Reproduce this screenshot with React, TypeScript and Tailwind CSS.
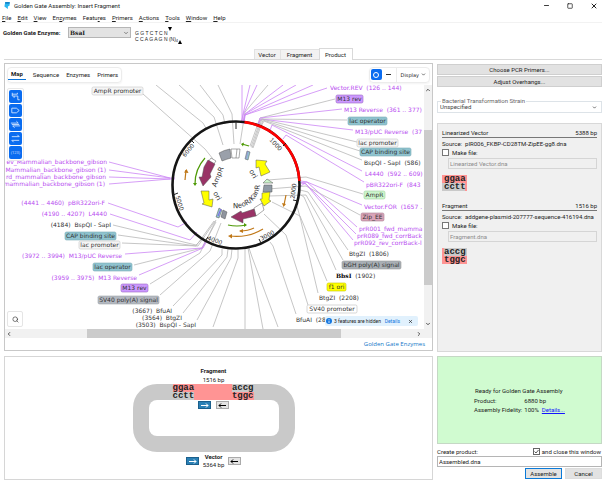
import { ChevronDown, ChevronLeft, ChevronRight, ChevronUp, Minus, Search, Square, X } from "lucide-react";
import type { ReactNode } from "react";

const GRAY = "#b8b8b8";
const PURPLE = "#cb85f5";
const INK = "#333333";
const VIOLET = "#b84df0";

type Line = { p: string; c?: string };

const lines: Line[] = [
  { p: "143,94 205,149 213,159" },
  { p: "156,85 203,123 207,130" },
  { p: "179,85 214,117 223,145" },
  { p: "200,85 223,115 225,124" },
  { p: "218,85 232,114 234,144" },
  { p: "268,85 245,112 240,144" },
  { p: "242,85 242,124", c: PURPLE },
  { p: "250,85 243,114 243,123", c: PURPLE },
  { p: "257,85 243,115 241,123", c: PURPLE },
  { p: "283,85 245,114 243,123", c: PURPLE },
  { p: "296,85 245,114 244,124", c: PURPLE },
  { p: "313,85 245,115", c: PURPLE },
  { p: "327,88 245,115 244,123", c: PURPLE },
  { p: "335,99 260,118 250,146" },
  { p: "342,109 260,118 258,125", c: PURPLE },
  { p: "347,120 261,119 251,147" },
  { p: "353,130 261,119 257,126", c: PURPLE },
  { p: "357,142 262,119 252,148" },
  { p: "360,151 263,120 253,148" },
  { p: "362,160 264,121 260,128" },
  { p: "362,171 272,125 269,133", c: PURPLE },
  { p: "364,182 286,135 283,139", c: PURPLE },
  { p: "363,194 306,177 268,180" },
  { p: "362,205 307,182 299,183", c: PURPLE },
  { p: "360,215 306,186 268,189" },
  { p: "357,227 307,182 301,181", c: PURPLE },
  { p: "356,234 306,184 301,183", c: PURPLE },
  { p: "353,240 305,183 301,186", c: PURPLE },
  { p: "348,250 308,192 300,190" },
  { p: "343,260 306,195 268,196" },
  { p: "336,270 304,197 299,194" },
  { p: "327,281 300,216 272,202" },
  { p: "318,293 300,217 297,206" },
  { p: "308,305 286,235 264,214" },
  { p: "296,314 273,246 270,242" },
  { p: "222,249 222,255 173,306" },
  { p: "228,249 227,257 183,313" },
  { p: "232,249 231,258 197,320" },
  { p: "238,249 238,258 213,327" },
  { p: "245,248 245,329" },
  { p: "248,248 263,329" },
  { p: "249,248 252,257 278,327" },
  { p: "221,223 210,251 160,295" },
  { p: "216,220 200,253 150,284" },
  { p: "122,243 198,246 215,221" },
  { p: "118,235 196,246 214,221" },
  { p: "113,225 196,245 204,237" },
  { p: "134,265 202,248 216,222" },
  { p: "125,254 202,248 206,240", c: PURPLE },
  { p: "139,275 203,248 207,241", c: PURPLE },
  { p: "110,214 190,240 197,232", c: PURPLE },
  { p: "108,203 178,227 187,222", c: PURPLE },
  { p: "109,162 170,178 175,178", c: PURPLE },
  { p: "109,170 170,178", c: PURPLE },
  { p: "109,177 170,179", c: PURPLE },
  { p: "109,184 170,179 175,179", c: PURPLE },
];

type Tag = { t: string; x: number; y: number; w: number; f: string; s?: string };
const BLUE = "#8fc3cf";
const tags: Tag[] = [
  { t: "AmpR promoter", x: 92, y: 91, w: 51, f: "#f5f5f5", s: "#c8c8c8" },
  { t: "M13 rev", x: 336, y: 99, w: 27, f: "#cc99ff", s: "#9a66c4" },
  { t: "lac operator", x: 348, y: 121, w: 39, f: BLUE, s: "#7aabb6" },
  { t: "lac promoter", x: 357, y: 143, w: 41, f: "#f5f5f5", s: "#c8c8c8" },
  { t: "CAP binding site", x: 360, y: 152, w: 51, f: BLUE, s: "#7aabb6" },
  { t: "AmpR", x: 364, y: 195, w: 21, f: "#ccf5cc", s: "#a0d0a0" },
  { t: "Zip_EE", x: 361, y: 217, w: 23, f: "#d9a3b8", s: "#a87f90" },
  { t: "bGH poly(A) signal", x: 342, y: 265, w: 59, f: "#a9afb5", s: "#9a9a9a" },
  { t: "f1 ori", x: 327, y: 287, w: 19, f: "#ffff00", s: "#c4c400" },
  { t: "SV40 promoter", x: 307, y: 309, w: 50, f: "#ffffff", s: "#bcbcbc" },
  { t: "CAP binding site", x: 65, y: 236, w: 51, f: BLUE, s: "#7aabb6" },
  { t: "lac promoter", x: 79, y: 245, w: 41, f: "#f5f5f5", s: "#c8c8c8" },
  { t: "lac operator", x: 93, y: 267, w: 39, f: BLUE, s: "#7aabb6" },
  { t: "M13 rev", x: 121, y: 288, w: 27, f: "#cc99ff", s: "#9a66c4" },
  { t: "SV40 poly(A) signal", x: 98, y: 300, w: 61, f: "#b3b8c0", s: "#a0a4aa" },
];

type Label = { t: string; x: number; y: number; end?: boolean; dark?: boolean };
const labels: Label[] = [
  { t: "Vector.REV  (126 .. 144)", x: 330, y: 88 },
  { t: "M13 Reverse  (361 .. 377)", x: 344, y: 110 },
  { t: "M13/pUC Reverse  (37", x: 355, y: 132 },
  { t: "BspQI - SapI  (586)", x: 364, y: 163, dark: true },
  { t: "L4440  (592 .. 609)", x: 365, y: 174 },
  { t: "pBR322ori-F  (843", x: 366, y: 185 },
  { t: "Vector.FOR  (1657 .", x: 364, y: 207 },
  { t: "prR001_fwd_mamma", x: 359, y: 229 },
  { t: "prR089_fwd_corrBack", x: 357, y: 236 },
  { t: "prR092_rev_corrBack-l", x: 354, y: 243 },
  { t: "BtgZI  (1806)", x: 349, y: 254, dark: true },
  { t: "BtgZI  (2208)", x: 319, y: 298, dark: true },
  { t: "BfuAI  (28", x: 296, y: 320, dark: true },
  { t: "ev_Mammalian_backbone_gibson", x: 107, y: 162, end: true },
  { t: "Mammalian_backbone_gibson (1)", x: 106, y: 170, end: true },
  { t: "rd_mammalian_backbone_gibson", x: 106, y: 177, end: true },
  { t: "mammalian_backbone_gibson (1)", x: 105, y: 184, end: true },
  { t: "(4441 .. 4460)  pBR322ori-F", x: 105, y: 203, end: true },
  { t: "(4190 .. 4207)  L4440", x: 107, y: 214, end: true },
  { t: "(4184)  BspQI - SapI", x: 111, y: 225, end: true, dark: true },
  { t: "(3972 .. 3994)  M13/pUC Reverse", x: 122, y: 256, end: true },
  { t: "(3959 .. 3975)  M13 Reverse", x: 137, y: 278, end: true },
  { t: "(3667)  BfuAI", x: 172, y: 311, end: true, dark: true },
  { t: "(3564)  BtgZI", x: 182, y: 318, end: true, dark: true },
  { t: "(3503)  BspQI - SapI", x: 196, y: 325, end: true, dark: true },
];

const scale = [
  { t: "1000", x: 276, y: 144, r: 46 },
  { t: "2000", x: 293, y: 191, r: -83 },
  { t: "3000", x: 267, y: 235, r: -28 },
  { t: "4000", x: 215, y: 240, r: 20 },
  { t: "5000", x: 180, y: 203, r: 73 },
  { t: "6000", x: 188, y: 150, r: -50 },
];

function PlasmidMap() {
  return (
    <svg
      viewBox="5 85 419 244"
      className="block h-[244px] min-w-0 flex-1 font-['DejaVu_Sans',sans-serif] text-[6px]"
      role="img"
      aria-label="Plasmid map"
    >
      <g fill="none" strokeWidth="0.8">
        {lines.map((l, i) => (
          <polyline key={i} points={l.p} stroke={l.c ?? GRAY} />
        ))}
      </g>
      <circle cx="236" cy="185" r="63.5" fill="none" stroke="#151515" strokeWidth="2.6" />
      <path d="M244.5 122.1A63.5 63.5 0 0 1 299.4 181" fill="none" stroke="#ff0000" strokeWidth="2.6" />
      <path
        d="M236 122V129M286 143L283 146M298 201L293 200M261 243L259 239M205 241L208 237M173 195L178 193M190 139L194 143"
        stroke="#222"
        strokeWidth="1"
      />
      <g stroke="#555" strokeWidth="0.5">
        <path d="M219 153Q224 150 230 149L231 158Q227 159 222 161Z" fill="#9aa0aa" />
        <path d="M231 149L240 149L239 158L232 158Z" fill="#fff" />
        <path d="M237 149L236 158" />
        <path d="M247 151L250 152L248 160L245 159Z" fill="#8fc3cf" />
        <path d="M248 151L246 159" stroke="#a070d8" />
        <path d="M256 160L267 161L265 164L270 172L261 176L259 167L256 168Z" fill="#ffff00" />
        <path d="M263 183L267 179L273 183Z" fill="#ccf5cc" />
        <path d="M264 185H272V192H263Z" fill="#8f9aa5" />
        <path d="M262 193L270 192L269 200L271 201L264 206L260 199L262 199Z" fill="#ffff00" />
        <path d="M211 158L216 161L213 165L208 162Z" fill="#fff" />
        <path d="M208 160L215 164L210 174L211 177L203 186L199 177L202 177L204 167Z" fill="#993366" />
        <path d="M201 191L209 191L209 200L213 199L212 207L202 204L204 203Z" fill="#ffff00" />
        <path d="M216 217L219 208L222 210L219 218Z" fill="#8fc3cf" />
        <path d="M218 216L221 209" stroke="#8060f0" strokeWidth="1" />
        <path d="M221 217L223 210L227 212L225 219Z" fill="#8f959f" />
        <path d="M254 208L262 203L264 210L256 216Z" fill="#fff" />
        <path d="M254 209L256 216L243 219L243 223L231 217L241 211L242 213Z" fill="#993366" />
      </g>
      <g fill="none" stroke="#4e9a06" strokeWidth="1.2">
        <path d="M249 146L242 144" />
        <path d="M205 158Q195 169 195 184" />
        <path d="M228 225Q237 227 246 225" />
      </g>
      <path d="M241 144L244 142.5L243 146.5ZM195 186L193 183H197ZM247 225L244 223V227Z" fill="#4e9a06" />
      <g fill="none" stroke="#c07818" strokeWidth="1.2">
        <path d="M185 180L186 170" />
        <path d="M286 195L284 205" />
        <path d="M254 228Q248 231 240 231" />
        <path d="M263 229Q248 238 230 236" />
      </g>
      <path
        d="M186.500 169L184 172.500L188.500 173ZM283.500 207L282 203L286 204ZM239 231L243 229V233ZM228 236L232 234V238.500Z"
        fill="#c07818"
      />
      <g fill={INK}>
        {scale.map((s) => (
          <text key={s.t} transform={`translate(${s.x} ${s.y}) rotate(${s.r})`} textAnchor="middle" dominantBaseline="central">
            {s.t}
          </text>
        ))}
        <g className="text-[7px]">
          <text transform="translate(253 174) rotate(62)" textAnchor="middle" dominantBaseline="central">ori</text>
          <text transform="translate(217 196) rotate(62)" textAnchor="middle" dominantBaseline="central">ori</text>
          <text transform="translate(218 177) rotate(-68)" textAnchor="middle" dominantBaseline="central">AmpR</text>
          <path id="neo" d="M233 208A25 25 0 0 0 260 181" fill="none" />
          <text>
            <textPath href="#neo">NeoR/KanR</textPath>
          </text>
        </g>
      </g>
      {tags.map((g, i) => (
        <g key={i}>
          <rect x={g.x} y={g.y - 4} width={g.w} height="8" rx="1.5" fill={g.f} stroke={g.s} strokeWidth="0.6" />
          <text x={g.x + g.w / 2} y={g.y + 2} textAnchor="middle" fill={INK}>
            {g.t}
          </text>
        </g>
      ))}
      {labels.map((l) => (
        <text
          key={l.t}
          x={l.x}
          y={l.y + 2}
          textAnchor={l.end ? "end" : "start"}
          fill={l.dark ? INK : VIOLET}
          className="whitespace-pre"
        >
          {l.t}
        </text>
      ))}
      <text x="336" y="278" fill={INK} className="whitespace-pre">
        <tspan className="font-['DejaVu_Serif',serif] text-[6px] font-bold" fill="#000">BbsI</tspan>
        {"  (1902)"}
      </text>
    </svg>
  );
}

const menus = ["File", "Edit", "View", "Enzymes", "Features", "Primers", "Actions", "Tools", "Window", "Help"];
const accel = [0, 0, 0, 2, 5, 0, 0, 0, 0, 0];

const tools: { n: string; d: ReactNode }[] = [
  { n: "Show enzymes", d: <path d="M3.500 2.500V6H9.500V10H11.500M3.500 4H9M9 2.500V4M5.500 6V8" /> },
  { n: "Show features", d: <path d="M3 4H8L11 6.500L8 9H3Z" /> },
  { n: "Show primers", d: <path d="M2 5H10L8 3M12 8H4L6 10M3 6.500H11" /> },
  { n: "Show translations", d: <path d="M3 4.500H11L9 2.500M11 8.500H3L5 10.500" /> },
];

function ArrowButton({ on, label }: { on?: boolean; label: string }) {
  return (
    <button
      type="button"
      aria-label={label}
      className={`flex h-2 w-[13px] items-center justify-center border ${on ? "border-[#1b5f8c] bg-[#2a80b5] text-white" : "border-[#aaaaaa] bg-[#e4e4e4] text-black"}`}
    >
      <svg viewBox="0 0 9 5" className="h-[5px] w-[9px]" fill="none" stroke="currentColor">
        {on ? <path d="M1 2.500H8M6 .5L8 2.500L6 4.500" /> : <path d="M8 2.500H1M3 .5L1 2.500L3 4.500" />}
      </svg>
    </button>
  );
}

function Overhang({ top, bottom, pink }: { top: string; bottom: string; pink: "top" | "bottom" }) {
  const up = pink === "top";
  return (
    <div className={`w-[25px] font-['Liberation_Mono',monospace] text-[9px] leading-2 font-bold text-[#222] ${up ? "border-r-2" : "border-l-2"} border-[#ff9494]`}>
      <div className={`h-2 ${up ? "bg-[#ff9494] pl-[2px]" : "bg-[#c9c9c9]"}`}>{top}</div>
      <div className={`h-2 ${up ? "bg-[#c9c9c9] pl-[2px]" : "bg-[#ff9494]"}`}>{bottom}</div>
    </div>
  );
}

function Part(p: { name: string; size: string; source: string; file: string; top: string; bottom: string; pink: "top" | "bottom" }) {
  return (
    <section>
      <div className="flex h-[10px] items-center justify-between border-b border-[#777]">
        <h2>{p.name}</h2>
        <span>{p.size}</span>
      </div>
      <p className="mt-px h-[9px] leading-[9px] whitespace-nowrap">Source:&nbsp; {p.source}</p>
      <label className="flex h-[9px] items-center gap-[3px]">
        <input type="checkbox" className="size-[7px] appearance-none border border-[#777] bg-white" />
        Make file:
      </label>
      <div className="mt-px pl-[6px]">
        <input
          aria-label={`${p.name} file name`}
          disabled
          defaultValue={p.file}
          className="block h-[11px] w-full border border-[#d5d5d5] bg-[#f0f0f0] px-px text-[#8c8c8c]"
        />
      </div>
      <div className="mt-[6px]">
        <Overhang top={p.top} bottom={p.bottom} pink={p.pink} />
      </div>
    </section>
  );
}

export default function App() {
  return (
    <div className="min-h-screen bg-white font-[Roboto,'Open_Sans',sans-serif] text-[6px] leading-[8px] text-[#222]">
      <header>
        <div className="flex h-[11px] items-center pr-1 pl-1">
          <svg viewBox="0 0 6 8" className="mr-1 h-[7px] w-[6px]">
            <path d="M1 0H6V4L4 5V8L0 5Z" fill="#29b6f0" />
            <path d="M1 0H6V2H1Z" fill="#1583c8" />
          </svg>
          <h1 className="flex-1">Golden Gate Assembly: Insert Fragment</h1>
          <div className="flex items-center gap-[17px]">
            <button type="button" aria-label="Minimize"><Minus size={7} strokeWidth={3} /></button>
            <button type="button" aria-label="Maximize"><Square size={6} strokeWidth={3} /></button>
            <button type="button" aria-label="Close"><X size={8} strokeWidth={3} /></button>
          </div>
        </div>
        <nav className="flex h-[12px] items-center gap-[6px] border-b border-[#f2f2f2] pt-[3px] pl-[2px]">
          {menus.map((m, i) => (
            <button type="button" key={m}>
              {m.slice(0, accel[i])}
              <span className="underline">{m[accel[i]]}</span>
              {m.slice(accel[i] + 1)}
            </button>
          ))}
        </nav>
      </header>

      <div className="flex h-[25px] items-start pt-1 pl-[3px]">
        <label htmlFor="enzyme" className="w-[65px] pt-[2px] font-bold">Golden Gate Enzyme:</label>
        <div className="grid">
          <select
            id="enzyme"
            className="col-start-1 row-start-1 h-[11px] w-[63px] appearance-none border border-[#b5b5b5] bg-[#e3e3e3] pl-px font-['DejaVu_Serif',serif] text-[6px] font-bold"
          >
            <option>BsaI</option>
          </select>
          <ChevronDown size={6} className="pointer-events-none col-start-1 row-start-1 mr-[2px] self-center justify-self-end" />
        </div>
        <div className="pt-[3px] pl-1 font-['Liberation_Sans',sans-serif] text-[5px] leading-[6px]">
          <div className="flex">G G T C T C N<svg viewBox="0 0 4 4" className="-mt-[3px] size-[4px]"><path d="M0 0H4L2 4Z" /></svg></div>
          <div className="flex">C C A G A G N (N)<span className="pt-[2px] text-[4px]">4</span><svg viewBox="0 0 4 4" className="mt-1 size-[4px]"><path d="M0 4H4L2 0Z" /></svg></div>
        </div>
      </div>

      <div className="ml-1 flex h-3 items-end justify-center border-b border-[#d9d9d9]" role="tablist">
        <button type="button" role="tab" className="h-[10px] w-[27px] border border-b-0 border-[#e2e2e2] bg-[#f2f2f2]">Vector</button>
        <button type="button" role="tab" className="h-[10px] w-[38px] border-t border-[#e2e2e2] bg-[#f2f2f2]">Fragment</button>
        <button type="button" role="tab" aria-selected="true" className="-mb-px h-3 w-[34px] border border-b-0 border-[#d9d9d9] bg-white">Product</button>
      </div>

      <main className="mt-[3px] flex gap-1 pl-1">
        <div className="flex min-w-0 flex-1 flex-col gap-[5px]">
          <section className="border border-[#c8c8c8]">
            <div className="flex h-[21px] items-center justify-between px-[2px]">
              <nav className="flex h-4 items-center gap-[7px] rounded-sm border border-[#ececec] pr-[3px] shadow-xs">
                <button type="button" className="h-[11px] border-b border-[#0a74d8] px-[3px] font-bold">Map</button>
                <button type="button">Sequence</button>
                <button type="button">Enzymes</button>
                <button type="button">Primers</button>
              </nav>
              <div className="flex h-4 items-center gap-1 rounded-sm border border-[#ececec] px-px font-['DejaVu_Sans',sans-serif] shadow-xs">
                <button type="button" aria-label="Circular view" className="flex size-[11px] items-center justify-center rounded-xs bg-[#0a6cf0]">
                  <span className="size-[6px] rounded-full border border-white" />
                </button>
                <button type="button" aria-label="Linear view" className="flex w-[6px] justify-center"><span className="h-px w-[5px] bg-[#333]" /></button>
                <button type="button" className="flex h-full items-center gap-[2px] border-l border-[#ececec] pr-[2px] pl-1 text-[5px]">
                  Display <ChevronDown size={5} strokeWidth={3} />
                </button>
              </div>
            </div>

            <div className="relative flex">
              <PlasmidMap />
              <div className="flex w-2 flex-col items-center bg-[#f1f1f1]">
                <ChevronUp size={6} strokeWidth={3} className="my-[2px] shrink-0" />
                <div className="mt-[35px] w-full flex-1 bg-[#cbcbcb]" />
                <ChevronDown size={6} strokeWidth={3} className="mt-[36px] mb-[2px] shrink-0" />
              </div>

              <div className="absolute top-[3px] left-[2px] flex flex-col gap-px rounded-xs border border-[#e8e8e8] bg-white p-px">
                {tools.map((t) => (
                  <button key={t.n} type="button" aria-label={t.n} className="size-[13px] rounded-xs bg-[#0a6cf0]">
                    <svg viewBox="0 0 14 13" className="size-[13px]" fill="none" stroke="#e0edff" strokeWidth="0.9">{t.d}</svg>
                  </button>
                ))}
                <button type="button" className="size-[13px] rounded-xs bg-[#0a6cf0] text-[4px] leading-[13px] text-[#c4dcff]">(123)</button>
              </div>

              <button type="button" aria-label="Find" className="absolute bottom-[2px] left-[2px] flex size-4 items-center justify-center rounded-xs border border-[#e5e5e5] bg-white">
                <Search size={7} />
              </button>

              <div className="absolute right-[14px] bottom-[3px] flex h-[10px] w-[93px] items-center rounded-xs bg-[#e1f1fd] px-px text-[5px]">
                <svg viewBox="0 0 6 6" className="mr-[2px] size-[6px] shrink-0">
                  <circle cx="3" cy="3" r="3" fill="#1477e0" />
                  <path d="M3 2.600V5M3 1.200V2" stroke="#fff" strokeWidth="0.8" />
                </svg>
                <span className="flex-1 whitespace-nowrap">3 features are hidden</span>
                <a href="#details" className="text-[#1477e0]">Details</a>
                <button type="button" aria-label="Dismiss" className="mr-1 ml-2"><X size={5} strokeWidth={3} /></button>
              </div>
            </div>

            <div className="flex h-[9px] items-center bg-[#f1f1f1]">
              <ChevronLeft size={6} strokeWidth={3} className="mx-px" />
              <div className="ml-[74px] h-full flex-1 bg-[#cbcbcb]" />
              <ChevronRight size={6} strokeWidth={3} className="mr-[10px] ml-[75px]" />
            </div>
            <div className="flex h-3 items-center justify-end pr-[7px]">
              <a href="#enzymes" className="font-['Open_Sans',sans-serif] text-[#1477c8]">Golden Gate Enzymes</a>
            </div>
          </section>

          <section className="flex h-[124px] flex-col items-center border border-[#d6d6d6] pt-[10px] pr-[10px]">
            <h2 className="font-bold">Fragment</h2>
            <p className="leading-[9px]">1516 bp</p>
            <div className="relative h-[68px] w-[162px] rounded-[24px] border-16 border-[#c9c9c9] bg-[#c9c9c9]">
              <div className="flex h-full items-start justify-center gap-[5px] rounded-[8px] bg-white pt-px">
                <ArrowButton on label="Fragment forward" />
                <ArrowButton label="Fragment reversed" />
              </div>
              <div className="absolute -top-4 left-6 flex h-4 w-[81px] justify-between bg-[#ff9494] font-['Liberation_Mono',monospace] text-[9px] leading-2 font-bold">
                <div>
                  <div className="h-2">ggaa</div>
                  <div className="h-2 bg-[#c9c9c9]">cctt</div>
                </div>
                <div>
                  <div className="h-2 bg-[#c9c9c9]">accg</div>
                  <div className="h-2">tggc</div>
                </div>
              </div>
            </div>
            <div className="flex items-center gap-1 pt-px">
              <ArrowButton on label="Vector forward" />
              <div className="text-center">
                <h2 className="font-bold">Vector</h2>
                <p>5364 bp</p>
              </div>
              <ArrowButton label="Vector reversed" />
            </div>
          </section>
        </div>

        <aside className="flex w-[165px] shrink-0 flex-col pt-px">
          <button type="button" className="h-[11px] border border-[#cfcfcf] bg-[#e2e2e2]">Choose PCR Primers...</button>
          <button type="button" className="mt-px h-[11px] border border-[#cfcfcf] bg-[#e2e2e2]">Adjust Overhangs...</button>

          <fieldset className="mt-[10px] border border-[#dde3e8] px-[2px]">
            <legend className="ml-px px-px leading-[8px] text-[#666]">
              <label htmlFor="strain">Bacterial Transformation Strain</label>
            </legend>
            <div className="-mt-[3px] grid">
              <select id="strain" className="col-start-1 row-start-1 h-[10px] appearance-none bg-transparent text-[#444]">
                <option>Unspecified</option>
              </select>
              <ChevronDown size={5} strokeWidth={3} className="pointer-events-none col-start-1 row-start-1 mr-[2px] self-center justify-self-end" />
            </div>
          </fieldset>

          <div className="mt-[10px] flex h-[229px] flex-col gap-[10px] border border-[#d8d8d8] bg-[#f0f0f0] px-1 pt-1">
            <Part name="Linearized Vector" size="5388 bp" source="pIR006_FKBP-CD28TM-ZipEE-gg8.dna" file="Linearized Vector.dna" top="ggaa" bottom="cctt" pink="top" />
            <Part name="Fragment" size="1516 bp" source="addgene-plasmid-207777-sequence-416194.dna" file="Fragment.dna" top="accg" bottom="tggc" pink="bottom" />
          </div>

          <div className="mt-1 flex h-[88px] flex-col items-center justify-center border border-[#c5d8c5] bg-[#d0fbd0]">
            <div className="flex flex-col">
              <p className="h-[9px] pl-px">Ready for Golden Gate Assembly</p>
              <dl className="grid grid-cols-[auto_auto] gap-x-[2px] leading-[9px]">
                <dt>Product:</dt>
                <dd>6880 bp</dd>
                <dt>Assembly Fidelity:</dt>
                <dd>100% &nbsp;<a href="#fidelity" className="text-[#1414ff] underline">Details...</a></dd>
              </dl>
            </div>
          </div>

          <div className="mt-[3px] flex h-[9px] items-center justify-between pr-px">
            <label htmlFor="product">Create product:</label>
            <label className="flex items-center gap-[2px]">
              <span className="grid">
                <input type="checkbox" defaultChecked className="col-start-1 row-start-1 size-[7px] appearance-none border border-[#666] bg-white" />
                <svg viewBox="0 0 7 7" className="pointer-events-none col-start-1 row-start-1 size-[7px]" fill="none" stroke="#333" strokeWidth="0.8"><path d="M1.500 3.500L3 5L5.500 2" /></svg>
              </span>
              and close this window
            </label>
          </div>
          <input id="product" defaultValue="Assembled.dna" className="h-[11px] border border-[#b5b5b5] px-px" />
          <div className="mt-px flex justify-end gap-[3px]">
            <button type="button" className="h-[11px] w-[37px] border border-[#0a7ad8] bg-[#e2e2e2]">Assemble</button>
            <button type="button" className="h-[11px] w-[37px] border border-[#dddddd] bg-[#e2e2e2]">Cancel</button>
          </div>
        </aside>
      </main>
    </div>
  );
}
